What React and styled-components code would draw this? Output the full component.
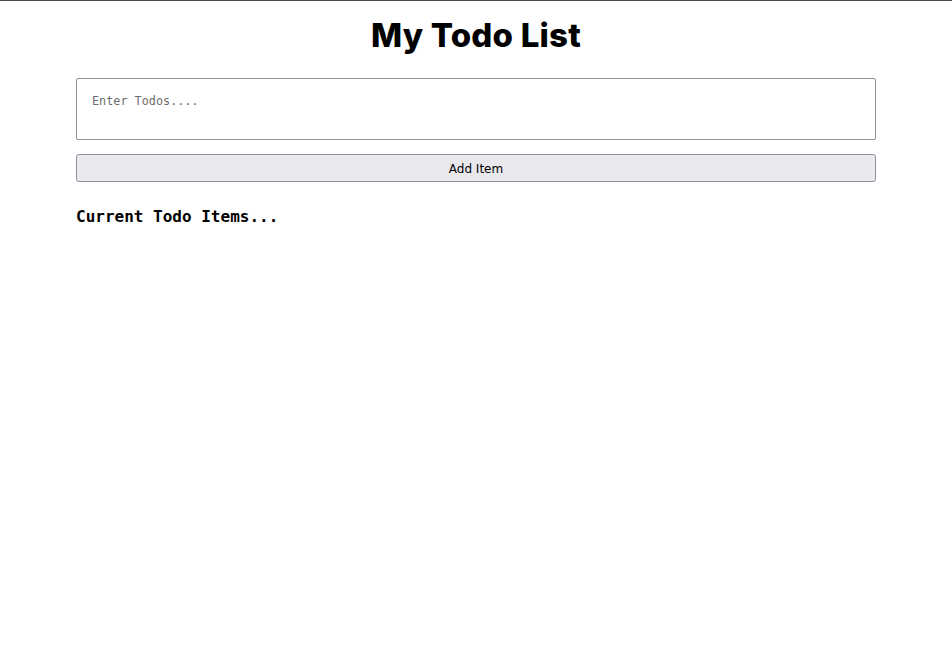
import React, { useState } from "react";
import styled, { createGlobalStyle } from "styled-components";

const GlobalStyle = createGlobalStyle`
  html, body {
    margin: 0;
    padding: 0;
    background: #ffffff;
  }
  body {
    border-top: 1px solid #4a4a55;
  }
`;

const Page = styled.div`
  width: 800px;
  margin: 0 auto;
  display: flex;
  flex-direction: column;
`;

const Title = styled.h1`
  margin: 15px 0 0;
  text-align: center;
  font-family: Inter, "Noto Sans", sans-serif;
  font-weight: 800;
  font-size: 33px;
  line-height: 38px;
  color: #000;
  letter-spacing: 0.2px;
`;

const TodoInput = styled.textarea`
  margin-top: 24px;
  box-sizing: border-box;
  height: 62px;
  width: 100%;
  padding: 15px 15px;
  border: 1px solid #8f8f9d;
  border-radius: 2px;
  font-family: "DejaVu Sans Mono", monospace;
  font-size: 11.8px;
  resize: none;
  outline: none;

  &::placeholder {
    color: #6d6d6d;
  }
`;

const AddButton = styled.button`
  margin-top: 14px;
  box-sizing: border-box;
  height: 28px;
  width: 100%;
  padding-top: 2px;
  background: #e9e9ed;
  border: 1px solid #8f8f9d;
  border-radius: 3px;
  font-family: "DejaVu Sans", sans-serif;
  font-size: 12px;
  color: #000;
  cursor: pointer;
`;

const SectionHeading = styled.h3`
  margin: 25px 0 0;
  font-family: "DejaVu Sans Mono", monospace;
  font-weight: bold;
  font-size: 16px;
  color: #000;
`;

export default function App() {
  const [text, setText] = useState("");
  return (
    <>
      <GlobalStyle />
      <Page>
        <Title>My Todo List</Title>
        <TodoInput
          placeholder="Enter Todos...."
          value={text}
          onChange={(e) => setText(e.target.value)}
        />
        <AddButton>Add Item</AddButton>
        <SectionHeading>Current Todo Items...</SectionHeading>
      </Page>
    </>
  );
}
